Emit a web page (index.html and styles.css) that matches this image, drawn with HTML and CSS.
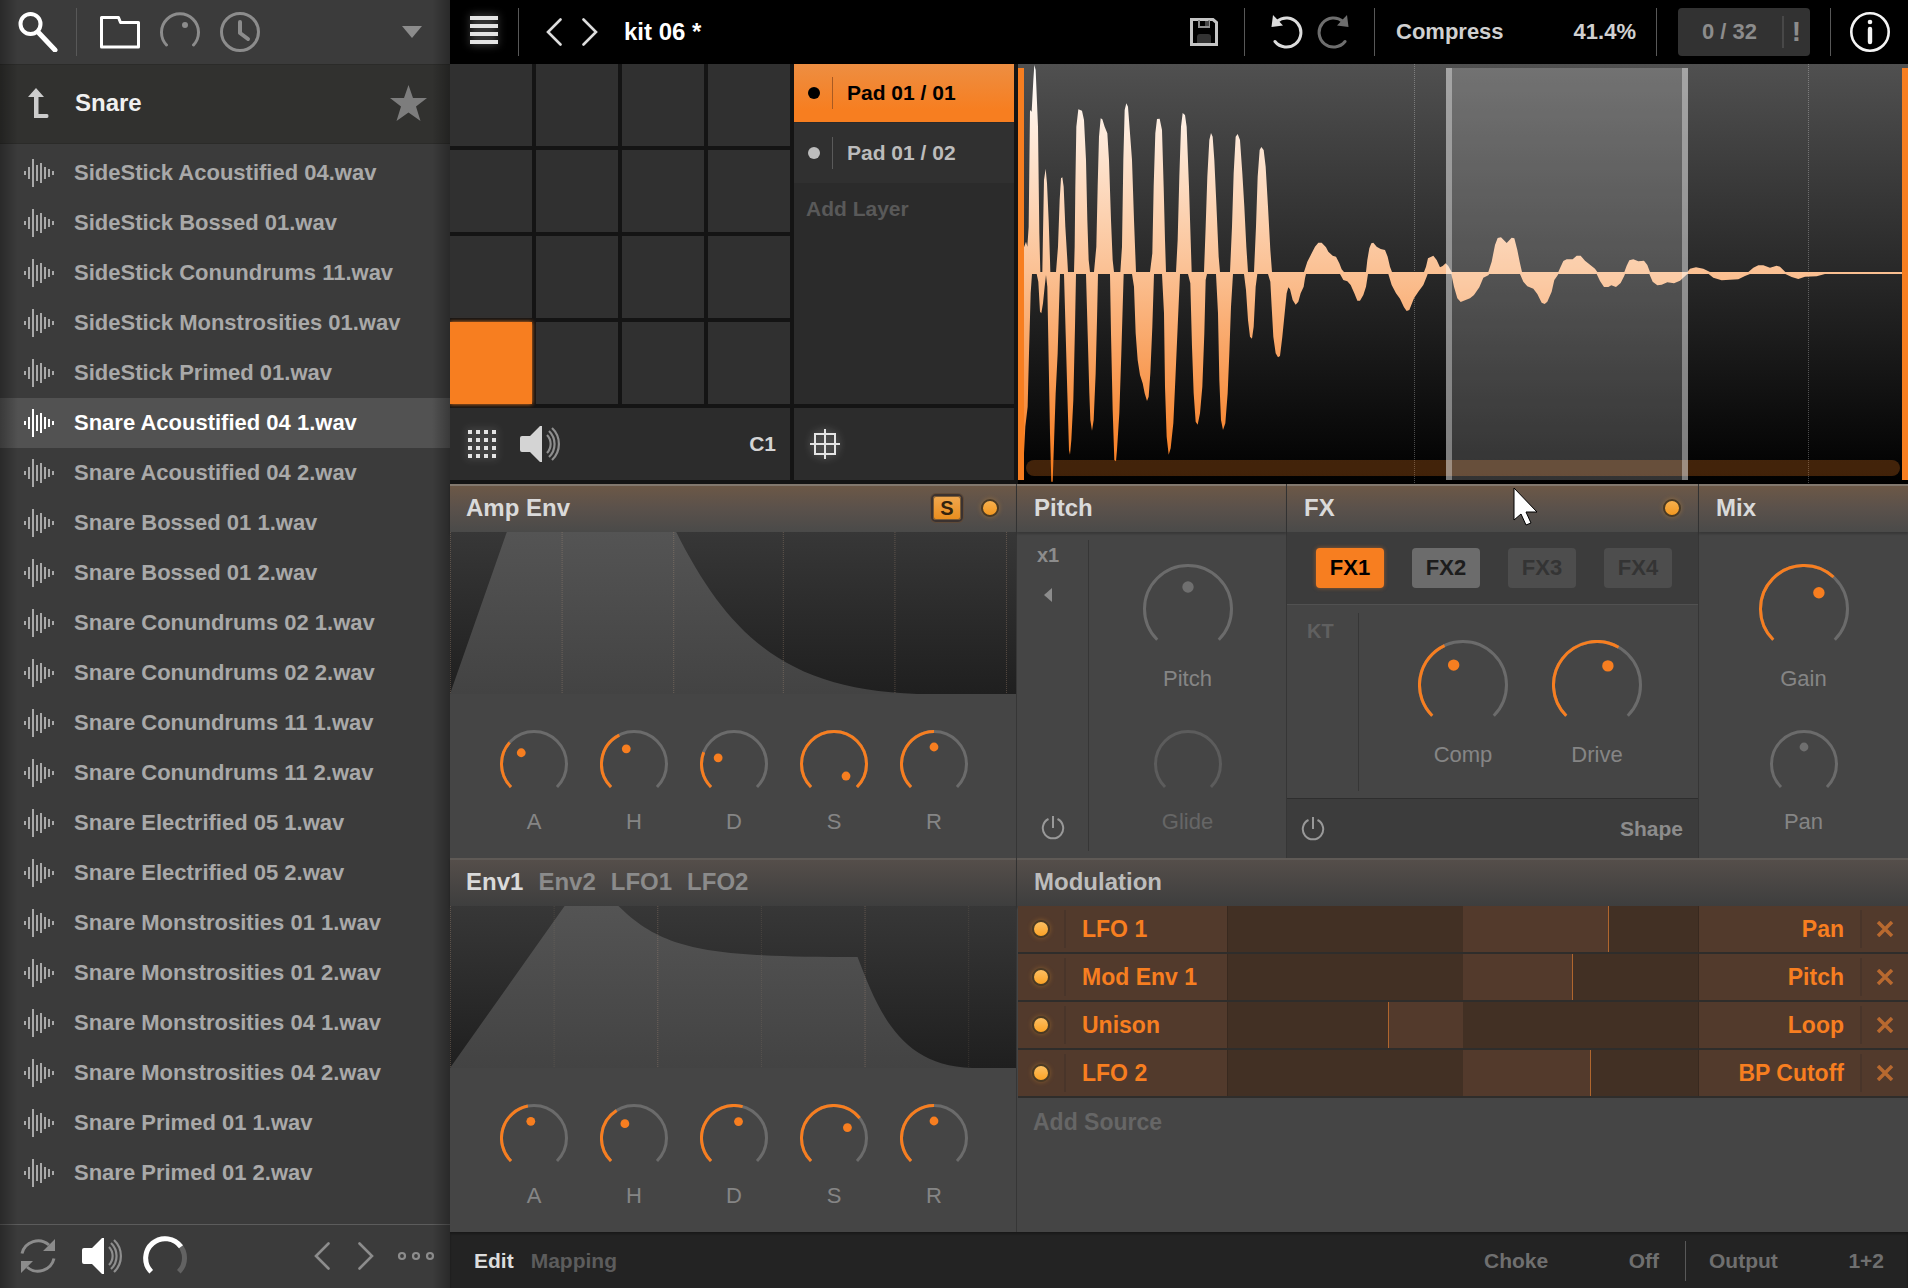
FILE: index.html
```html
<!DOCTYPE html>
<html lang="en">
<head>
<meta charset="utf-8">
<title>kit 06</title>
<link rel="stylesheet" href="styles.css">
</head>
<body>
<svg class="defs" aria-hidden="true">
  <symbol id="i-wave" viewBox="0 0 30 28"><path fill="currentColor" d="M0 12h2v4H0zM4 8h2v12H4zM8 0h2v28H8zM12 6h2v16h-2zM16 4h2v20h-2zM20 8h2v12h-2zM24 10h2v8h-2zM28 12h2v4h-2z"/></symbol>
  <symbol id="i-speaker" viewBox="0 0 41 36"><path fill="currentColor" d="M0 12q0-2 2-2h8L20 0h2v36h-2L10 26H2q-2 0-2-2z"/><g fill="none" stroke="#8e8e8e" stroke-width="2.200"><path d="M27 9a13 13 0 0 1 0 18"/><path d="M29 5a18 18 0 0 1 0 26"/><path d="M32 2a22 22 0 0 1 0 32"/></g></symbol>
  <symbol id="i-prev" viewBox="0 0 16 28"><path fill="none" stroke="currentColor" stroke-width="2.600" stroke-linecap="round" d="M14.500 1.500L2 14l12.500 12.500"/></symbol>
  <symbol id="i-next" viewBox="0 0 16 28"><path fill="none" stroke="currentColor" stroke-width="2.600" stroke-linecap="round" d="M1.500 1.500L14 14L1.500 26.500"/></symbol>
  <symbol id="i-power" viewBox="0 0 24 26"><path fill="none" stroke="currentColor" stroke-width="2" d="M12 1v12M7.500 4a10.200 10.200 0 1 0 9 0"/></symbol>
  <symbol id="i-undo" viewBox="0 0 32 34"><path fill="none" stroke="currentColor" stroke-width="3" stroke-linecap="round" d="M4 26.500A14.500 14.500 0 1 0 6 6.500"/><path fill="currentColor" d="M2 0L.5 12L12 10.500Z"/></symbol>
  <symbol id="i-close" viewBox="0 0 18 16"><path fill="none" stroke="currentColor" stroke-width="3.500" d="M2 1L16 15M16 1L2 15"/></symbol>
</svg>
<div class="app">
  <aside class="browser">
    <nav class="browser-top">
      <button class="on" aria-label="Search"><svg width="40" height="40"><circle cx="12.500" cy="12" r="10" fill="none" stroke="currentColor" stroke-width="4"/><path d="M20 20L37 38" stroke="currentColor" stroke-width="5" stroke-linecap="round"/></svg></button>
      <span class="rule"></span>
      <button class="on" aria-label="Folders"><svg width="40" height="40"><path d="M1.500 7v-1.500h17l2 5h18v24.500h-37z" fill="none" stroke="currentColor" stroke-width="3" stroke-linejoin="round"/></svg></button>
      <button aria-label="Presets"><svg width="40" height="40"><path d="M6.500 33A18.500 18.500 0 1 1 33.500 33" fill="none" stroke="currentColor" stroke-width="3" stroke-linecap="round"/><circle cx="25" cy="13" r="3" fill="currentColor"/></svg></button>
      <button aria-label="Recent"><svg width="40" height="40"><circle cx="20" cy="20" r="18.500" fill="none" stroke="currentColor" stroke-width="3"/><path d="M20 10v11l8 6" fill="none" stroke="currentColor" stroke-width="4" stroke-linecap="round" stroke-linejoin="round"/></svg></button>
      <button class="push" aria-label="Menu"><svg width="20" height="12"><path d="M0 0h20L10 12z" fill="currentColor"/></svg></button>
    </nav>
    <div class="browser-path">
      <button class="up" aria-label="Up"><svg width="22" height="30"><path d="M0 9L8 0l8 9h-5.500v17h8.500q1.500 0 1.500 2t-1.500 2H6V9z" fill="currentColor"/></svg></button>
      <h1>Snare</h1>
      <button class="star" aria-label="Favourite"><svg width="37" height="36" viewBox="0 0 37 36"><path d="M18.500 0l4.500 13h14l-11 8.500 4.500 14.500-12-8.500-12 8.500 4.500-14.500L0 13h14z" fill="currentColor"/></svg></button>
    </div>
    <ul class="files">
      <li><button><svg><use href="#i-wave"/></svg>SideStick Acoustified 04.wav</button></li>
      <li><button><svg><use href="#i-wave"/></svg>SideStick Bossed 01.wav</button></li>
      <li><button><svg><use href="#i-wave"/></svg>SideStick Conundrums 11.wav</button></li>
      <li><button><svg><use href="#i-wave"/></svg>SideStick Monstrosities 01.wav</button></li>
      <li><button><svg><use href="#i-wave"/></svg>SideStick Primed 01.wav</button></li>
      <li><button class="on"><svg><use href="#i-wave"/></svg>Snare Acoustified 04 1.wav</button></li>
      <li><button><svg><use href="#i-wave"/></svg>Snare Acoustified 04 2.wav</button></li>
      <li><button><svg><use href="#i-wave"/></svg>Snare Bossed 01 1.wav</button></li>
      <li><button><svg><use href="#i-wave"/></svg>Snare Bossed 01 2.wav</button></li>
      <li><button><svg><use href="#i-wave"/></svg>Snare Conundrums 02 1.wav</button></li>
      <li><button><svg><use href="#i-wave"/></svg>Snare Conundrums 02 2.wav</button></li>
      <li><button><svg><use href="#i-wave"/></svg>Snare Conundrums 11 1.wav</button></li>
      <li><button><svg><use href="#i-wave"/></svg>Snare Conundrums 11 2.wav</button></li>
      <li><button><svg><use href="#i-wave"/></svg>Snare Electrified 05 1.wav</button></li>
      <li><button><svg><use href="#i-wave"/></svg>Snare Electrified 05 2.wav</button></li>
      <li><button><svg><use href="#i-wave"/></svg>Snare Monstrosities 01 1.wav</button></li>
      <li><button><svg><use href="#i-wave"/></svg>Snare Monstrosities 01 2.wav</button></li>
      <li><button><svg><use href="#i-wave"/></svg>Snare Monstrosities 04 1.wav</button></li>
      <li><button><svg><use href="#i-wave"/></svg>Snare Monstrosities 04 2.wav</button></li>
      <li><button><svg><use href="#i-wave"/></svg>Snare Primed 01 1.wav</button></li>
      <li><button><svg><use href="#i-wave"/></svg>Snare Primed 01 2.wav</button></li>
    </ul>
    <div class="browser-foot">
      <button aria-label="Refresh"><svg width="36" height="36"><g fill="none" stroke="currentColor" stroke-width="3"><path d="M2 15.500A16.500 16.500 0 0 1 29 7"/><path d="M34 20.500A16.500 16.500 0 0 1 7 29"/></g><path d="M35 1v12H23zM1 35V23h12z" fill="currentColor"/></svg></button>
      <button class="on preview" aria-label="Preview"><svg width="41" height="36"><use href="#i-speaker"/></svg></button>
      <button class="on" aria-label="Preview level"><svg width="44" height="44"><g fill="none" stroke-width="5"><path d="M8.200 37.800A19.500 19.500 0 1 1 35.800 37.800" stroke="#626262"/><path d="M8.200 37.800A19.500 19.500 0 1 1 38 12.800" stroke="currentColor"/></g></svg></button>
      <button class="push" aria-label="Previous"><svg width="16" height="28"><use href="#i-prev"/></svg></button>
      <button class="next" aria-label="Next"><svg width="16" height="28"><use href="#i-next"/></svg></button>
      <button aria-label="More"><svg width="38" height="10" fill="none" stroke="currentColor" stroke-width="2.200"><circle cx="5" cy="5" r="3"/><circle cx="19" cy="5" r="3"/><circle cx="33" cy="5" r="3"/></svg></button>
    </div>
  </aside>

  <main class="editor">
    <header class="toolbar">
      <button class="glow" aria-label="Menu"><svg width="28" height="32"><path fill="currentColor" d="M0 0h28v4H0zM0 8h28v4H0zM0 16h28v4H0zM0 24h28v4H0z"/></svg></button>
      <span class="rule menu-rule"></span>
      <button class="kit-prev" aria-label="Previous kit"><svg width="16" height="28"><use href="#i-prev"/></svg></button>
      <button class="kit-next" aria-label="Next kit"><svg width="16" height="28"><use href="#i-next"/></svg></button>
      <strong class="kit">kit 06 *</strong>
      <button class="save push" aria-label="Save"><svg width="28" height="28"><path d="M1.500 1.500H23l3.500 3v22h-25z" fill="none" stroke="currentColor" stroke-width="3"/><path d="M9 2v7h10V2" fill="none" stroke="#8e8e8e" stroke-width="2"/><path d="M15 3h4v5h-4z" fill="#444"/><path d="M7 25v-6q0-3 3-3h8q3 0 3 3v6z" fill="#333"/></svg></button>
      <span class="rule"></span>
      <button class="undo" aria-label="Undo"><svg width="32" height="34"><use href="#i-undo"/></svg></button>
      <button class="redo" aria-label="Redo" disabled><svg width="32" height="34"><g transform="translate(32 0) scale(-1 1)"><use href="#i-undo"/></g></svg></button>
      <span class="rule"></span>
      <button class="macro"><span>Compress</span><span>41.4%</span></button>
      <span class="rule"></span>
      <button class="voices"><span>0 / 32</span><span class="panic">!</span></button>
      <span class="rule"></span>
      <button class="info" aria-label="Info"><svg width="40" height="40"><circle cx="20" cy="20" r="18.700" fill="none" stroke="currentColor" stroke-width="2.600"/><circle cx="20" cy="10" r="2.300" fill="currentColor"/><path d="M20 17v13" stroke="currentColor" stroke-width="4.400" stroke-linecap="round"/></svg></button>
    </header>

    <section class="stage">
      <div class="pads">
        <button aria-label="Pad 13"></button><button aria-label="Pad 14"></button><button aria-label="Pad 15"></button><button aria-label="Pad 16"></button>
        <button aria-label="Pad 9"></button><button aria-label="Pad 10"></button><button aria-label="Pad 11"></button><button aria-label="Pad 12"></button>
        <button aria-label="Pad 5"></button><button aria-label="Pad 6"></button><button aria-label="Pad 7"></button><button aria-label="Pad 8"></button>
        <button class="on" aria-label="Pad 1"></button><button aria-label="Pad 2"></button><button aria-label="Pad 3"></button><button aria-label="Pad 4"></button>
      </div>
      <div class="pads-foot">
        <button class="glow" aria-label="Grid"><svg width="28" height="28"><path fill="none" stroke="currentColor" stroke-width="4" stroke-dasharray="4 4" d="M0 2h28M0 10h28M0 18h28M0 26h28"/></svg></button>
        <button aria-label="Audition"><svg width="41" height="36"><use href="#i-speaker"/></svg></button>
        <span class="note">C1</span>
      </div>
      <div class="layers">
        <button class="layer on">Pad 01 / 01</button>
        <button class="layer">Pad 01 / 02</button>
        <button class="add-layer">Add Layer</button>
      </div>
      <div class="layers-foot">
        <button class="glow" aria-label="Layer map"><svg width="30" height="30"><path fill="none" stroke="currentColor" stroke-width="2" d="M5 5h20v20H5zM0 15h30M15 0v30"/></svg></button>
      </div>
      <div class="sample">
        <svg class="sample-wave" viewBox="0 0 890 420" preserveAspectRatio="none" role="img" aria-label="Sample waveform">
          <defs>
            <linearGradient id="waveFill" gradientUnits="userSpaceOnUse" x1="0" y1="12" x2="0" y2="1250">
              <stop offset="0" stop-color="#fff"/><stop offset=".5" stop-color="#fbc194"/><stop offset=".9" stop-color="#f78631"/><stop offset="1" stop-color="#f77d20"/>
            </linearGradient>
          </defs>
          <g stroke="#fff" stroke-opacity=".28" stroke-dasharray="1 1"><path d="M396.500 0v420M790.500 0v420"/></g>
          <g transform="translate(-8 -4) scale(.33333)" fill="url(#waveFill)">
            <path d="M42 642V562L48 545L52 560L56 500L60 150L65 155L70 60L73 15L77 30L84 200L88 520L91 636L97 636L99 520L102 360L107 326L111 370L116 480L120 600L121 636L138 636L144 560L149 420L153 355L157 352L161 380L166 500L172 600L174 636L192 636L194 560L196 380L199 200L205 148L216 152L222 180L228 300L232 480L236 600L240 636L252 636L259 560L263 380L267 230L272 175L277 178L284 200L292 220L297 300L303 480L308 600L312 636L331 636L336 560L340 300L344 150L349 130L354 140L360 220L366 300L372 480L378 636L420 636L427 580L431 380L436 220L441 177L449 176L456 210L461 380L465 540L468 636L498 636L503 540L508 350L513 200L518 159L525 165L530 200L537 380L542 540L545 636L582 636L587 500L592 350L598 240L603 219L608 230L613 300L619 430L626 590L630 636L660 636L666 500L671 340L677 230L683 222L690 240L697 340L703 440L709 560L714 636L732 636L738 500L743 350L749 270L754 261L761 270L767 320L774 440L781 570L786 636L882 636L892 605L905 580L915 560L925 548L935 548L948 562L955 575L968 587L978 590L988 610L995 628L1002 636L1068 636L1072 600L1078 565L1084 550L1090 548L1100 560L1112 567L1125 570L1133 590L1140 620L1146 636L1242 636L1248 620L1254 595L1270 587L1280 600L1290 622L1298 618L1307 610L1315 618L1325 636L1435 636L1445 605L1455 555L1463 534L1473 532L1490 549L1505 533L1513 535L1522 570L1530 610L1536 636L1645 636L1650 625L1660 603L1670 598L1688 598L1700 587L1712 587L1725 602L1740 614L1755 626L1762 636L1843 636L1850 617L1858 601L1870 598L1885 604L1902 602L1912 615L1920 636L2032 636L2040 626L2058 622L2080 626L2100 636L2215 636L2230 623L2245 616L2260 616L2280 623L2300 617L2310 620L2326 636L2676 636V642Z"/>
            <path d="M42 636V1180L46 1100L53 1040L57 880L62 700L66 642L80 642L85 665L90 755L94 760L99 730L104 680L108 645L112 680L116 900L120 1120L124 1265L128 1265L132 1150L137 1000L143 880L147 740L150 642L162 642L167 820L172 1000L177 1170L180 1184L184 1140L190 1020L195 800L198 642L228 642L233 820L238 1000L241 1080L246 1112L251 1080L257 940L261 780L264 642L300 642L303 820L308 1050L313 1200L318 1204L321 1170L328 1060L334 880L341 642L366 642L372 680L377 820L383 900L390 945L398 970L404 1000L411 1023L416 1010L421 940L427 800L432 642L456 642L462 760L465 980L470 1130L476 1184L482 1165L490 1090L496 960L503 800L510 642L534 642L541 670L546 860L551 1000L557 1085L563 1094L570 1060L577 980L583 820L587 660L591 642L618 642L624 760L628 960L633 1080L639 1110L646 1090L653 1000L658 880L663 740L669 642L702 642L708 690L714 780L720 830L726 836L731 800L737 680L742 642L774 642L781 665L785 740L790 830L797 880L804 892L810 888L817 830L824 760L830 700L835 682L840 688L848 720L857 734L865 725L872 700L881 680L885 655L888 642L990 642L1000 660L1012 664L1022 675L1033 700L1042 722L1050 722L1060 705L1068 680L1074 642L1135 642L1145 675L1158 700L1170 716L1182 742L1190 753L1198 750L1212 715L1225 695L1240 675L1250 650L1253 642L1324 642L1332 680L1342 715L1352 726L1380 715L1392 705L1408 682L1420 653L1435 646L1438 642L1530 642L1540 665L1552 679L1570 686L1582 702L1595 728L1604 732L1612 725L1625 695L1633 660L1642 647L1645 642L1760 642L1770 663L1782 681L1795 681L1804 676L1818 681L1832 669L1843 647L1845 642L1918 642L1928 665L1942 676L1955 674L1972 667L1992 670L2010 662L2028 646L2032 642L2096 642L2110 653L2135 661L2185 658L2205 648L2220 642L2326 642L2345 651L2365 657L2385 650L2420 649L2445 642L2676 642V636Z"/>
          </g>
          <rect x="8" y="396" width="874" height="16" rx="8" fill="#f77e20" fill-opacity=".26"/>
          <g fill="#fff"><rect x="428" y="4" width="242" height="412" fill-opacity=".2"/><rect x="428" y="4" width="6" height="412" fill-opacity=".36"/><rect x="664" y="4" width="6" height="412" fill-opacity=".36"/></g>
          <g fill="#f77e20"><rect y="4" width="6" height="412"/><rect x="884" y="4" width="6" height="412"/></g>
        </svg>
      </div>
    </section>

    <section class="panels">
      <article class="panel amp">
        <header><h2>Amp Env</h2><button class="sync">S</button><input type="checkbox" class="led" checked aria-label="Amp envelope on"></header>
        <svg class="graph" viewBox="0 0 568 162" preserveAspectRatio="none">
          <defs><linearGradient id="envFill" x1="0" y1="0" x2="0" y2="1"><stop offset="0" stop-color="#545454"/><stop offset="1" stop-color="#434343"/></linearGradient></defs>
          <path fill="url(#envFill)" d="M0 162L57 0H227C280 105 340 162 483 162Z"/>
          <g stroke="#c9a48a" stroke-opacity=".3" stroke-dasharray="1 1"><path d="M.5 0v162M112.500 0v162M224.500 0v162M334.500 0v162M446.500 0v162M558.500 0v162"/></g>
        </svg>
        <div class="env-knobs">
          <label class="knob"><input type="range" min="0" max="1" step="any" value="0.32"><span>A</span></label>
          <label class="knob"><input type="range" min="0" max="1" step="any" value="0.40"><span>H</span></label>
          <label class="knob"><input type="range" min="0" max="1" step="any" value="0.245"><span>D</span></label>
          <label class="knob"><input type="range" min="0" max="1" step="any" value="1"><span>S</span></label>
          <label class="knob"><input type="range" min="0" max="1" step="any" value="0.5"><span>R</span></label>
        </div>
      </article>

      <article class="panel">
        <header><h2>Pitch</h2></header>
        <div class="panel-row">
          <div class="side">
            <button>x1</button>
            <button class="tri" aria-label="Direction"><svg width="8" height="14"><path d="M8 0v14L0 7z" fill="currentColor"/></svg></button>
            <button class="power" aria-label="Pitch power"><svg width="24" height="26"><use href="#i-power"/></svg></button>
          </div>
          <div class="knob-stack">
            <label class="knob big bipolar"><input type="range" min="0" max="1" step="any" value="0.5"><span>Pitch</span></label>
            <label class="knob bipolar off"><input type="range" min="0" max="1" step="any" value="0.5" disabled><span>Glide</span></label>
          </div>
        </div>
      </article>

      <article class="panel fx">
        <header><h2>FX</h2><input type="checkbox" class="led" checked aria-label="FX on">
          <svg class="pointer" width="27" height="40"><path d="M1 1v32l7-6 5 11 5-2-5-11h11z" fill="#fff" stroke="#000" stroke-width="1"/></svg>
        </header>
        <div class="slots"><button class="on">FX1</button><button class="loaded">FX2</button><button>FX3</button><button>FX4</button></div>
        <div class="panel-row fx-row">
          <div class="side"><button class="dim">KT</button></div>
          <div class="knob-pair">
            <label class="knob big"><input type="range" min="0" max="1" step="any" value="0.407"><span>Comp</span></label>
            <label class="knob big"><input type="range" min="0" max="1" step="any" value="0.61"><span>Drive</span></label>
          </div>
        </div>
        <div class="fx-foot"><button class="power" aria-label="FX power"><svg width="24" height="26"><use href="#i-power"/></svg></button><button class="shape">Shape</button></div>
      </article>

      <article class="panel">
        <header><h2>Mix</h2></header>
        <div class="panel-row">
          <div class="knob-stack">
            <label class="knob big"><input type="range" min="0" max="1" step="any" value="0.658"><span>Gain</span></label>
            <label class="knob bipolar"><input type="range" min="0" max="1" step="any" value="0.5"><span>Pan</span></label>
          </div>
        </div>
      </article>
    </section>

    <section class="lower">
      <article class="panel amp sub">
        <header><button class="tab on">Env1</button><button class="tab">Env2</button><button class="tab">LFO1</button><button class="tab">LFO2</button></header>
        <svg class="graph" viewBox="0 0 568 162" preserveAspectRatio="none">
          <path fill="url(#envFill)" d="M0 162L115 0H169C215 45 260 51 409 51C430 106 452 160 524 162Z"/>
          <g stroke="#c9a48a" stroke-opacity=".3" stroke-dasharray="1 1"><path d="M.5 0v162M208.500 0v162M416.500 0v162"/><path stroke-opacity=".15" d="M104.500 0v162M312.500 0v162M520.500 0v162"/></g>
        </svg>
        <div class="env-knobs">
          <label class="knob"><input type="range" min="0" max="1" step="any" value="0.46"><span>A</span></label>
          <label class="knob"><input type="range" min="0" max="1" step="any" value="0.38"><span>H</span></label>
          <label class="knob"><input type="range" min="0" max="1" step="any" value="0.557"><span>D</span></label>
          <label class="knob"><input type="range" min="0" max="1" step="any" value="0.693"><span>S</span></label>
          <label class="knob"><input type="range" min="0" max="1" step="any" value="0.5"><span>R</span></label>
        </div>
      </article>

      <article class="panel sub mod">
        <header><h2>Modulation</h2></header>
        <ul class="routes">
          <li><span class="led-cell"><input type="checkbox" class="led" checked aria-label="LFO 1 on"></span><button class="source">LFO 1</button><div class="amount"><i style="left:50%;width:31%"></i><input type="range" aria-label="LFO 1 amount" min="-1" max="1" step="any" value="0.62"></div><button class="target">Pan</button><button class="remove" aria-label="Remove LFO 1"><svg width="18" height="16"><use href="#i-close"/></svg></button></li>
          <li><span class="led-cell"><input type="checkbox" class="led" checked aria-label="Mod Env 1 on"></span><button class="source">Mod Env 1</button><div class="amount"><i style="left:50%;width:23.500%"></i><input type="range" aria-label="Mod Env 1 amount" min="-1" max="1" step="any" value="0.47"></div><button class="target">Pitch</button><button class="remove" aria-label="Remove Mod Env 1"><svg width="18" height="16"><use href="#i-close"/></svg></button></li>
          <li><span class="led-cell"><input type="checkbox" class="led" checked aria-label="Unison on"></span><button class="source">Unison</button><div class="amount"><i class="neg" style="left:34%;width:16%"></i><input type="range" aria-label="Unison amount" min="-1" max="1" step="any" value="-0.32"></div><button class="target">Loop</button><button class="remove" aria-label="Remove Unison"><svg width="18" height="16"><use href="#i-close"/></svg></button></li>
          <li><span class="led-cell"><input type="checkbox" class="led" checked aria-label="LFO 2 on"></span><button class="source">LFO 2</button><div class="amount"><i style="left:50%;width:27.200%"></i><input type="range" aria-label="LFO 2 amount" min="-1" max="1" step="any" value="0.54"></div><button class="target">BP Cutoff</button><button class="remove" aria-label="Remove LFO 2"><svg width="18" height="16"><use href="#i-close"/></svg></button></li>
        </ul>
        <button class="add-source">Add Source</button>
      </article>
    </section>

    <footer class="status">
      <button class="on">Edit</button><button class="mapping">Mapping</button>
      <button class="choke push"><span>Choke</span><span>Off</span></button>
      <span class="rule"></span>
      <button class="output"><span>Output</span><span>1+2</span></button>
    </footer>
  </main>
</div>
<script src="knobs.js"></script>
</body>
</html>
```
FILE: knobs.js
```js
// Draws the dial of every knob from the value of its range input.
const SWEEP = 270;

function point(c, r, value) {
  const a = (value * SWEEP - 225) * Math.PI / 180;
  return [c + r * Math.cos(a), c + r * Math.sin(a)];
}

function arc(c, r, to) {
  const [x0, y0] = point(c, r, 0);
  const [x1, y1] = point(c, r, to);
  return `M${x0} ${y0}A${r} ${r} 0 ${to * SWEEP > 180 ? 1 : 0} 1 ${x1} ${y1}`;
}

document.querySelectorAll('.knob').forEach(knob => {
  const value = Number(knob.querySelector('input').value);
  const big = knob.classList.contains('big');
  const size = big ? 90 : 68;
  const c = size / 2;
  const r = c - 1.5;
  const [dx, dy] = point(c, big ? 22 : 17, value);
  const fill = knob.classList.contains('bipolar') ? '' : `<path class="knob-value" d="${arc(c, r, value)}"/>`;
  const dot = knob.classList.contains('off') ? '' : `<circle cx="${dx}" cy="${dy}" r="${big ? 5.7 : 4.4}"/>`;
  knob.insertAdjacentHTML('afterbegin',
    `<svg width="${size}" height="${size}"><path class="knob-track" d="${arc(c, r, 1)}"/>${fill}${dot}</svg>`);
});
```
FILE: styles.css
```css
* { box-sizing: border-box; }

body {
  margin: 0;
  background: #141414;
  font-family: "Liberation Sans", Arial, sans-serif;
  font-size: 22px;
  font-weight: bold;
  line-height: 24px;
  color: #8c8c8c;
}

h1, h2, ul { margin: 0; padding: 0; }
h1, h2 { font-size: 24px; line-height: 24px; font-weight: bold; }
ul { list-style: none; }
svg { display: block; flex: none; }

button {
  display: flex;
  align-items: center;
  padding: 0;
  border: 0;
  background: none;
  color: inherit;
  font: inherit;
  text-align: left;
  white-space: nowrap;
}

.defs { position: absolute; width: 0; height: 0; }
.push { margin-left: auto; }
.rule { flex: none; width: 1px; height: 48px; background: #585858; }

.app {
  display: grid;
  grid-template-columns: 450px minmax(0, 1fr);
  min-height: 100vh;
}

/* Browser */
.browser {
  position: relative;
  display: flex;
  flex-direction: column;
  background: #3b3b3b;
}
.browser::after {
  content: "";
  position: absolute;
  inset: 0;
  pointer-events: none;
  background:
    linear-gradient(90deg, rgba(0,0,0,.3), transparent 18px),
    linear-gradient(270deg, rgba(0,0,0,.3), transparent 18px);
}
.browser-top {
  display: flex;
  align-items: center;
  gap: 20px;
  height: 64px;
  padding: 0 28px 0 18px;
}
.browser-top .rule { margin: 0 3px 0 -2px; }
.browser .on { color: #fff; }
.browser-path {
  display: flex;
  align-items: center;
  height: 80px;
  padding: 0 23px 2px 28px;
  background: #31312f;
  border: solid #2b2b29;
  border-width: 1px 0;
}
.browser-path h1 { margin-left: 25px; color: #f0f0f0; }
.up { color: #ccc; }
.star { margin-left: auto; color: #7d7d7d; }
.files { padding: 4px 0; }
.files button {
  width: 100%;
  height: 50px;
  padding: 0 24px;
  color: #a9a9a9;
}
.files svg { width: 30px; height: 28px; margin-right: 20px; }
.files .on { background: #525252; }
.browser-foot {
  display: flex;
  align-items: center;
  height: 64px;
  margin-top: auto;
  padding: 0 15px 2px 20px;
  border-top: 1px solid #5c5c5c;
}
.preview { margin: 0 20px 0 26px; }
.next { margin: 0 23px 0 28px; }

/* Toolbar */
.editor { display: flex; flex-direction: column; }
.toolbar {
  display: flex;
  align-items: center;
  height: 64px;
  padding: 0 18px 0 20px;
  background: #000;
  color: #dcdcdc;
}
.glow { color: #e4e4e4; filter: drop-shadow(0 0 4px rgba(255,255,255,.4)); }
.menu-rule { margin: 0 27px 0 20px; }
.kit-next { margin-left: 20px; }
.kit { margin-left: 26px; font-size: 24px; color: #fff; }
.save { margin-right: 26px; color: #c4c4c4; }
.undo { margin: 0 14px 0 26px; }
.redo { margin-right: 25px; color: #6e6e6e; }
.macro { justify-content: space-between; width: 240px; margin: 0 20px 0 21px; color: #d0d0d0; }
.voices {
  width: 132px;
  height: 48px;
  margin: 0 20px 0 21px;
  padding: 0 9px 0 24px;
  justify-content: space-between;
  border-radius: 4px;
  background: #323232;
  color: #8c8c8c;
}
.panic { height: 32px; padding-left: 8px; border-left: 2px solid #484848; font-size: 28px; line-height: 32px; }
.info { margin-left: 19px; color: #f4f4f4; }

/* Pads, layers and sample */
.stage {
  display: grid;
  grid-template-columns: 340px 220px minmax(0, 1fr);
  grid-template-rows: 340px 72px;
  gap: 4px;
  padding-bottom: 4px;
}
.pads {
  display: grid;
  grid-template: repeat(4, 1fr) / repeat(4, 1fr);
  gap: 4px;
}
.pads button { background: #303030; }
.pads .on { background: #f77e20; box-shadow: 0 0 4px #f77e20; }
.pads-foot, .layers-foot { display: flex; align-items: center; background: #2c2c2c; }
.pads-foot { grid-row: 2; gap: 24px; padding: 0 14px 0 18px; color: #d4d4d4; }
.note { margin-left: auto; font-size: 21px; }
.layers { grid-area: 1 / 2; background: #2b2b2b; font-size: 21px; }
.layers-foot { grid-area: 2 / 2; padding: 0 16px; }
.layer {
  position: relative;
  width: 100%;
  height: 60px;
  background: #303030;
  color: #bcbcbc;
  text-indent: 15px;
}
.layer::before {
  content: "";
  width: 12px;
  height: 12px;
  margin: 0 12px 0 14px;
  border-radius: 50%;
  background: currentColor;
}
.layer::after {
  content: "";
  position: absolute;
  left: 38px;
  width: 1px;
  height: 32px;
  background: #5a5a5a;
}
.layer.on {
  height: 58px;
  margin-bottom: 1px;
  color: #000;
  background: linear-gradient(#ed8e42, #f77e20 80%);
}
.layer.on::after { background: #a85a22; }
.add-layer { height: 52px; padding-left: 12px; color: #595959; }
.sample {
  grid-area: 1 / 3 / 3 / 4;
  margin-bottom: -4px;
  background: linear-gradient(#505050, #000);
}
.sample-wave { width: 100%; height: 420px; }

/* Panels */
.panels, .lower { display: grid; background: #454545; }
.panels { grid-template-columns: 566fr 270fr 412fr 210fr; }
.lower { flex: 1; grid-template-columns: 566fr 892fr; }
.panel { position: relative; display: flex; flex-direction: column; border-left: 1px solid #363636; }
.panel.amp { border-left: 0; }
.panel > header {
  display: flex;
  align-items: center;
  height: 48px;
  padding: 0 17px 2px;
  border-top: 2px solid #82786e;
  background: linear-gradient(#6c5847, #5a514b 50%, #4a4a49);
  color: #dadada;
  box-shadow: 0 2px 2px rgba(0,0,0,.2);
}
.panel.amp > header { padding-left: 16px; }
.sub > header {
  border-top-color: #5f5a56;
  background: linear-gradient(#554e4a, #3e3e3e);
  color: #bdbdbd;
}
.panel-row { flex: 1; display: flex; }
.tab { margin-right: 15px; font-size: 24px; color: #8b8b8b; }
.tab.on { color: #dadada; }

.led {
  appearance: none;
  width: 18px;
  height: 18px;
  margin: 0;
  border: 2px solid #4a3a24;
  border-radius: 50%;
  background: linear-gradient(#f7b04e, #f39820);
  box-shadow: 0 0 5px rgba(247,160,50,.35);
}
.fx .led { margin-left: auto; }
.amp .led { margin-left: 18px; }
.sync {
  width: 32px;
  height: 28px;
  margin-left: auto;
  justify-content: center;
  border: 2px solid #3b3230;
  border-radius: 5px;
  background: linear-gradient(#f0a850, #e98c1c);
  box-shadow: inset 0 0 0 1px #7a5a34, 0 0 0 1px #5f4a38;
  color: #33220e;
  font-size: 20px;
}
.graph { width: 100%; height: 162px; background: linear-gradient(#373737, #1f1f1f); }
.env-knobs {
  display: grid;
  grid-template-columns: repeat(5, 1fr);
  padding: 36px 32px 24px 34px;
}

.knob {
  position: relative;
  display: flex;
  flex-direction: column;
  align-items: center;
  gap: 12px;
  font-weight: normal;
  color: #858585;
}
.knob input, .amount input {
  position: absolute;
  inset: 0;
  width: 100%;
  height: 100%;
  margin: 0;
  opacity: 0;
}
.knob path { fill: none; stroke-width: 3; }
.knob .knob-track { stroke: #6b6b6b; }
.knob .knob-value { stroke: #f77e20; }
.knob circle { fill: #f77e20; }
.knob.bipolar circle { fill: #6f6f6f; }
.knob.off { color: #666; }
.knob.off .knob-track { stroke: #5c5c5c; }

.side {
  display: flex;
  flex-direction: column;
  align-items: flex-start;
  width: 72px;
  margin: 8px 0 7px;
  padding: 3px 0 10px 20px;
  border-right: 1px solid #363636;
  font-size: 20px;
}
.tri { margin: 21px 0 0 7px; }
.power { color: #999; }
.side .power { margin: auto 0 0 4px; }
.knob-stack {
  flex: 1;
  display: flex;
  flex-direction: column;
  gap: 39px;
  padding: 32px 0 24px;
}
.knob.big { gap: 13px; }
.dim { color: #606060; }

.slots {
  display: flex;
  gap: 28px;
  height: 72px;
  padding: 16px 0 0 29px;
  background: #3c3c3c;
}
.slots button {
  width: 68px;
  height: 40px;
  justify-content: center;
  border-radius: 4px;
  background: #4d4d4d;
  color: #343434;
}
.slots .on { background: #f77e20; color: #000; box-shadow: 0 0 4px rgba(247,126,32,.5); }
.slots .loaded { background: #6c6c6c; color: #1d1d1d; }
.fx-row { border-top: 1px solid #515151; }
.fx-row .side { padding-top: 6px; }
.knob-pair {
  flex: 1;
  display: grid;
  grid-template-columns: 134px 134px;
  justify-content: center;
  padding: 35px 0 0 3px;
}
.fx-foot {
  display: flex;
  align-items: center;
  justify-content: space-between;
  height: 60px;
  padding: 0 15px 0 14px;
  border-top: 1px solid #2e2e2e;
  background: #3c3c3c;
  font-size: 21px;
}
.pointer { position: absolute; left: 226px; top: 3px; z-index: 1; }

/* Modulation */
.routes { padding-left: 1px; font-size: 23px; color: #f77e20; }
.routes li {
  display: grid;
  grid-template-columns: 48px 161px minmax(0, 1fr) 163px 46px;
  height: 48px;
  border-bottom: 2px solid #2f2d2b;
  background: #523a2c;
}
.led-cell { display: grid; place-items: center; margin: 4px 0; border-right: 2px solid #49352a; }
.routes .led { background: linear-gradient(#fcbf62, #fca326); }
.source { padding-left: 16px; }
.target { justify-content: flex-end; margin: 4px 0; padding-right: 16px; border-right: 2px solid #49352a; }
.remove { justify-content: center; color: #b8692f; }
.amount { position: relative; background: #423024; border: solid #38291f; border-width: 0 1px; }
.amount i { position: absolute; top: 0; bottom: 0; background: #533a2c; border-right: 1px solid #b0662e; }
.amount .neg { border-right: 0; border-left: 1px solid #b0662e; }
.add-source { height: 48px; padding-left: 16px; font-size: 23px; color: #666; }

/* Status bar */
.status {
  display: flex;
  align-items: center;
  height: 56px;
  padding: 2px 24px 0;
  background: #232323;
  box-shadow: inset 0 2px 2px #1a1a1a;
  font-size: 21px;
  color: #6f6f6f;
}
.status .on { color: #dcdcdc; }
.status .rule { height: 40px; }
.mapping { margin-left: 17px; color: #5c5c5c; }
.choke, .output { justify-content: space-between; width: 175px; }
.choke { margin-right: 26px; }
.output { margin-left: 23px; }
```
